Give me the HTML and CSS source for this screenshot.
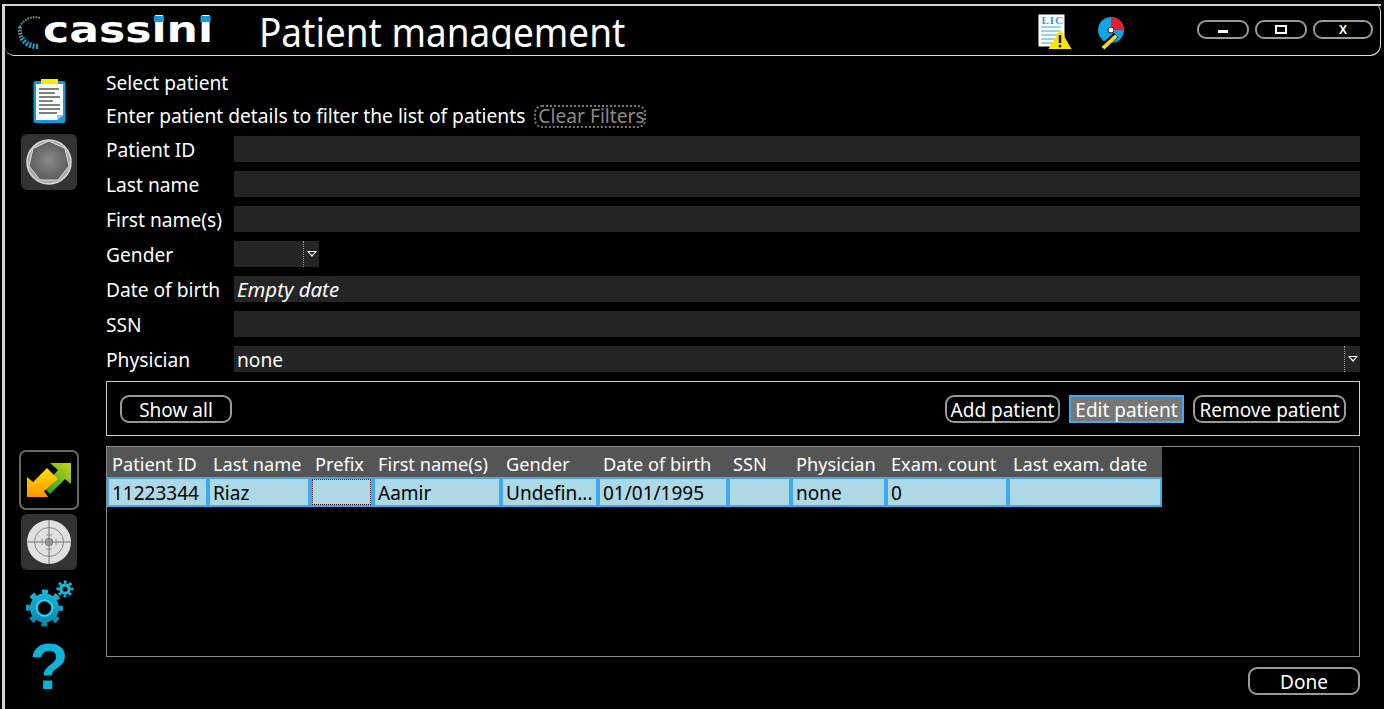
FILE: index.html
```html
<!DOCTYPE html>
<html lang="en">
<head>
    <meta charset="UTF-8">
    <meta name="viewport" content="width=device-width, initial-scale=1.0">
    <title>Patient management</title>
    <link rel="stylesheet" href="styles.css">
</head>
<body>
    <div class="window">
        <header class="titlebar">
            <svg class="swirl" width="27" height="35" viewBox="0 0 27 35">
                <path d="M25 4 A16 16 0 0 0 5 13" fill="none" stroke="#8a9299" stroke-width="2" stroke-dasharray="1.6 1.2"/>
                <path d="M5 13 A16 16 0 0 0 7 24" fill="none" stroke="#6f8ea3" stroke-width="4" stroke-dasharray="1.7 1.2"/>
                <path d="M7 24 A16 16 0 0 0 24 32" fill="none" stroke="#1c9fd8" stroke-width="5.5" stroke-dasharray="1.9 1.5"/>
            </svg>
            <div class="logo">cass<span class="logo-i">i</span>n<span class="logo-i">i</span></div>
            <div class="app-title">Patient management</div>
            <svg class="lic-icon" width="34" height="36" viewBox="0 0 34 36">
                <rect x="0.5" y="0.5" width="26" height="32" fill="#fff"/>
                <text class="lic-text" x="3.5" y="9.5">LIC</text>
                <path d="M3 13H23M3 17H23M3 21H20M3 25H16M3 29H14" stroke="#6cc4ef" stroke-width="1.4"/>
                <path d="M22 15 L33.5 35 H10.5 Z" fill="#ffe600"/>
                <path d="M22 21V29" stroke="#222" stroke-width="2.6"/>
                <circle cx="22" cy="32" r="1.5" fill="#222"/>
            </svg>
            <svg class="disc-icon" width="30" height="36" viewBox="0 0 30 36">
                <circle cx="15" cy="15" r="13" fill="#0ea5e6"/>
                <path d="M15 15V2A13 13 0 0 1 28 15Z" fill="#ee1c25"/>
                <path d="M5 33.5 L20 20" stroke="#000" stroke-width="6"/>
                <path d="M6.5 32 L19 20.5 L20.5 22 L8.5 33.5Z" fill="#f5e017" stroke="#f5e017" stroke-width="1.4" stroke-linejoin="round"/>
                <circle cx="15" cy="15" r="3" fill="#fff" stroke="#222"/>
            </svg>
            <div class="win-buttons">
                <button class="win-btn"><span class="glyph-min"></span></button>
                <button class="win-btn"><span class="glyph-max"></span></button>
                <button class="win-btn win-close">X</button>
            </div>
        </header>

        <div class="main">
            <nav class="sidebar">
                <svg class="clip-icon" width="33" height="44" viewBox="0 0 33 44">
                    <rect x="0.5" y="2" width="32" height="42" rx="2.5" fill="#0a9fe0"/>
                    <path d="M3 5H30V36L24 41H3Z" fill="#fff"/>
                    <path d="M24 41V36H30Z" fill="#bbb"/>
                    <rect x="8" y="0" width="17" height="5" fill="#ffee00"/>
                    <path d="M6 10H26M6 14H22M6 18H27M6 22H20M6 26H27M6 30H27M6 34H24" stroke="#555" stroke-width="1.4"/>
                </svg>
                <div class="tile tile-octagon">
                    <svg width="46" height="46" viewBox="0 0 46 46">
                        <defs>
                            <radialGradient id="octFill">
                                <stop offset="0" stop-color="#8a8a8a"/>
                                <stop offset="1" stop-color="#5e5e5e"/>
                            </radialGradient>
                        </defs>
                        <circle cx="23" cy="23" r="22" fill="#a8a8a8" stroke="#d8d8d8" stroke-width="1.5"/>
                        <path d="M23 2 L39 9.5 L43 27 L32 41 L14 41 L3 27 L7 9.5Z" fill="url(#octFill)" stroke="#ddd"/>
                    </svg>
                </div>

                <div class="bottom-tools">
                    <div class="tile-outline">
                        <svg width="60" height="60" viewBox="0 0 60 60">
                            <defs>
                                <linearGradient id="greenArrow" x1="1" y1="0" x2="0" y2="1">
                                    <stop offset="0" stop-color="#c9d60f"/>
                                    <stop offset="1" stop-color="#159a3c"/>
                                </linearGradient>
                                <linearGradient id="orangeArrow" x1="0" y1="0" x2="0" y2="1">
                                    <stop offset="0" stop-color="#ffe000"/>
                                    <stop offset="1" stop-color="#ff9500"/>
                                </linearGradient>
                            </defs>
                            <path d="M52 13V34L46 29L31 44L24 37L39 20L31 13Z" fill="url(#greenArrow)"/>
                            <path d="M8 47V27L14 32L28 18L39 29L25 41L29 47Z" fill="url(#orangeArrow)"/>
                        </svg>
                    </div>
                    <div class="tile tile-target">
                        <svg width="46" height="46" viewBox="0 0 46 46">
                            <circle cx="23" cy="23" r="22" fill="#e0e0e0"/>
                            <circle cx="23" cy="23" r="14.5" fill="none" stroke="#888" stroke-width="1"/>
                            <circle cx="23" cy="23" r="3.5" fill="#aaa" stroke="#777" stroke-width="1.2"/>
                            <path d="M23 1V45M1 23H45" stroke="#777" stroke-width="1"/>
                            <path d="M20 16H26M20 30H26M16 20V26M30 20V26" stroke="#888"/>
                        </svg>
                    </div>
                    <svg class="gear-icon" width="50" height="50" viewBox="0 0 50 50">
                        <defs>
                            <linearGradient id="gearFill" gradientUnits="userSpaceOnUse" x1="0" y1="8" x2="0" y2="48">
                                <stop offset="0" stop-color="#1cbbdc"/>
                                <stop offset="1" stop-color="#0a7fa8"/>
                            </linearGradient>
                        </defs>
                        <circle cx="18.5" cy="28" r="10.5" fill="none" stroke="url(#gearFill)" stroke-width="8"/>
                        <circle cx="18.5" cy="28" r="16" fill="none" stroke="url(#gearFill)" stroke-width="5" stroke-dasharray="6 6.57" stroke-dashoffset="3"/>
                        <circle cx="18.5" cy="28" r="8" fill="none" stroke="#3fd0ea" stroke-width="1.5"/>
                        <circle cx="39" cy="9" r="4.2" fill="none" stroke="url(#gearFill)" stroke-width="3.2"/>
                        <circle cx="39" cy="9" r="7" fill="none" stroke="url(#gearFill)" stroke-width="3" stroke-dasharray="2.7 2.8" stroke-dashoffset="1.35"/>
                    </svg>
                    <div class="help-icon">?</div>
                </div>
            </nav>

            <main class="content">
                <div class="text-line">Select patient</div>
                <div class="text-line filter-line">
                    <span>Enter patient details to filter the list of patients</span>
                    <span class="clear-filters">Clear Filters</span>
                </div>

                <div class="fields">
                    <div class="field"><label>Patient ID</label><div class="input"></div></div>
                    <div class="field"><label>Last name</label><div class="input"></div></div>
                    <div class="field"><label>First name(s)</label><div class="input"></div></div>
                    <div class="field"><label>Gender</label>
                        <div class="input input-gender"><span class="drop"><i></i></span></div>
                    </div>
                    <div class="field"><label>Date of birth</label><div class="input input-date">Empty date</div></div>
                    <div class="field"><label>SSN</label><div class="input"></div></div>
                    <div class="field"><label>Physician</label>
                        <div class="input">none<span class="drop"><i></i></span></div>
                    </div>
                </div>

                <div class="actions">
                    <button class="btn btn-show">Show all</button>
                    <div class="actions-right">
                        <button class="btn btn-add">Add patient</button>
                        <button class="btn btn-edit">Edit patient</button>
                        <button class="btn btn-remove">Remove patient</button>
                    </div>
                </div>

                <div class="grid-box">
                    <table class="patients">
                        <colgroup>
                            <col class="c1"><col class="c2"><col class="c3"><col class="c4"><col class="c5">
                            <col class="c6"><col class="c7"><col class="c8"><col class="c9"><col class="c10">
                        </colgroup>
                        <thead>
                            <tr>
                                <th>Patient ID</th><th>Last name</th><th>Prefix</th><th>First name(s)</th><th>Gender</th>
                                <th>Date of birth</th><th>SSN</th><th>Physician</th><th>Exam. count</th><th>Last exam. date</th>
                            </tr>
                        </thead>
                        <tbody>
                            <tr>
                                <td>11223344</td><td>Riaz</td><td class="current"></td><td>Aamir</td><td>Undefin...</td>
                                <td>01/01/1995</td><td></td><td>none</td><td>0</td><td></td>
                            </tr>
                        </tbody>
                    </table>
                </div>

                <div class="footer">
                    <button class="btn btn-done">Done</button>
                </div>
            </main>
        </div>
    </div>
</body>
</html>
```

FILE: styles.css
```css
html, body {
    margin: 0;
    height: 709px;
    overflow: hidden;
    background: #000;
}
body {
    font-family: "Noto Sans", Arial, sans-serif;
    font-size: 19.2px;
    color: #fff;
    padding-top: 4px;
    box-sizing: border-box;
}
.window {
    margin-left: 2px;
    height: 705px;
    border-left: 3px solid #d4d4d4;
    box-sizing: border-box;
    display: flex;
    flex-direction: column;
    position: relative;
}
.window::before {
    content: "";
    position: absolute;
    top: 0;
    left: 0;
    right: 3px;
    height: 2px;
    background: #d4d4d4;
}
.titlebar {
    height: 52px;
    flex: none;
    box-sizing: border-box;
    border-bottom: 1px solid #ddd;
    border-right: 1px solid #ddd;
    border-bottom-left-radius: 9px;
    border-bottom-right-radius: 11px;
    border-top-right-radius: 8px;
    margin-right: 3px;
    display: flex;
    align-items: flex-start;
    overflow: hidden;
}
.swirl {
    margin: 10px 0 0 10px;
    flex: none;
}
.logo {
    font-family: "DejaVu Sans", sans-serif;
    font-weight: bold;
    font-size: 35px;
    line-height: 40px;
    margin: 6px 0 0 1px;
    width: 168px;
    flex: none;
    transform: scaleX(1.26);
    transform-origin: left;
    white-space: nowrap;
}
.logo-i {
    position: relative;
}
.logo-i::before {
    content: "";
    position: absolute;
    left: 2px;
    right: 2px;
    top: 6px;
    height: 6px;
    background: #1799d6;
}
.app-title {
    font-size: 40.6px;
    line-height: 50px;
    margin-left: 48px;
    margin-top: 3px;
    height: 42px;
    overflow: hidden;
    white-space: nowrap;
    flex: none;
    transform: scaleX(0.91);
    transform-origin: left;
}
.lic-icon {
    margin: 10px 0 0 auto;
    flex: none;
}
.disc-icon {
    margin: 11px 0 0 24px;
    flex: none;
}
.lic-text {
    font-family: "Liberation Serif", serif;
    font-weight: bold;
    font-size: 11px;
    letter-spacing: 1px;
    fill: #1a9fe0;
}
.win-buttons {
    display: flex;
    gap: 6px;
    margin: 16px 0 0 71px;
    padding-right: 7px;
}
.win-btn {
    width: 52px;
    height: 19px;
    padding: 0;
    background: #000;
    border: 2px solid #999;
    border-radius: 9px;
    color: #fff;
    display: flex;
    align-items: center;
    justify-content: center;
}
.win-close {
    width: 60px;
    font-family: "Liberation Sans", sans-serif;
    font-size: 12px;
    font-weight: bold;
}
.glyph-min {
    width: 10px;
    height: 3px;
    background: #fff;
    margin-top: 4px;
}
.glyph-max {
    width: 8px;
    height: 5px;
    border: 2px solid #fff;
}
.main {
    flex: 1;
    display: flex;
    min-height: 0;
}
.sidebar {
    width: 101px;
    box-sizing: border-box;
    flex: none;
    padding: 23px 13px 19px 0;
    display: flex;
    flex-direction: column;
    align-items: center;
}
.clip-icon {
    flex: none;
}
.tile {
    width: 56px;
    height: 56px;
    background: #333;
    border-radius: 6px;
    display: flex;
    align-items: center;
    justify-content: center;
    flex: none;
}
.tile-octagon {
    margin-top: 11px;
}
.bottom-tools {
    margin-top: auto;
    display: flex;
    flex-direction: column;
    align-items: center;
}
.tile-outline {
    width: 60px;
    height: 60px;
    box-sizing: border-box;
    border: 2px solid #666;
    border-radius: 7px;
}
.tile-outline svg {
    display: block;
    margin: -2px;
}
.tile-target {
    margin-top: 4px;
}
.gear-icon {
    margin: 10px 0 0 4px;
    flex: none;
}
.help-icon {
    font-family: "Liberation Sans", sans-serif;
    font-weight: bold;
    font-size: 64px;
    line-height: 46px;
    height: 46px;
    margin-top: 14px;
    color: #0db2d8;
}
.content {
    width: 1254px;
    flex: none;
    padding-top: 14px;
}
.text-line {
    height: 26px;
    line-height: 26px;
    white-space: nowrap;
}
.filter-line {
    margin-top: 7px;
    display: flex;
    align-items: center;
}
.clear-filters {
    margin-left: 9px;
    width: 112px;
    height: 23px;
    box-sizing: border-box;
    border: 2px dotted #777;
    border-radius: 8px;
    padding-left: 2px;
    color: #8a8a8a;
    overflow: hidden;
    line-height: 18px;
    white-space: nowrap;
}
.fields {
    margin-top: 7px;
    display: flex;
    flex-direction: column;
    gap: 9px;
}
.field {
    display: flex;
    height: 26px;
    line-height: 28px;
}
label {
    width: 128px;
    flex: none;
    white-space: nowrap;
}
.input {
    flex: 1;
    background: #252525;
    padding-left: 3px;
    display: flex;
}
.input-gender {
    flex: none;
    width: 85px;
    box-sizing: border-box;
}
.input-date {
    font-style: italic;
    font-size: 20.4px;
    line-height: 26px;
}
.drop {
    margin-left: auto;
    width: 16px;
    height: 26px;
    box-sizing: border-box;
    border-left: 1px dotted #999;
    display: flex;
    align-items: center;
    justify-content: center;
}
.drop i {
    position: relative;
    width: 0;
    height: 0;
    border-left: 5px solid transparent;
    border-right: 5px solid transparent;
    border-top: 6px solid #fff;
}
.drop i::after {
    content: "";
    position: absolute;
    left: -3px;
    top: -5px;
    border-left: 3px solid transparent;
    border-right: 3px solid transparent;
    border-top: 3.5px solid #252525;
}
.actions {
    margin-top: 9px;
    height: 55px;
    box-sizing: border-box;
    border: 1px solid #ccc;
    padding: 0 13px;
    display: flex;
    align-items: center;
    justify-content: space-between;
}
.actions-right {
    display: flex;
    gap: 9px;
}
.btn {
    height: 28px;
    padding: 2px 0 0;
    box-sizing: border-box;
    background: #000;
    color: #fff;
    border: 2px solid #999;
    border-radius: 9px;
    font-family: inherit;
    font-size: 19px;
    line-height: 22px;
    white-space: nowrap;
}
.btn-show {
    width: 112px;
}
.btn-add {
    width: 115px;
}
.btn-edit {
    width: 115px;
    background: #777;
    border-color: #3fa9f5;
    border-radius: 0;
}
.btn-remove {
    width: 153px;
}
.grid-box {
    margin-top: 10px;
    height: 211px;
    box-sizing: border-box;
    border: 1px solid #8a8a8a;
}
.patients {
    table-layout: fixed;
    width: 1055px;
    border-collapse: separate;
    border-spacing: 0;
}
.c1 { width: 101px; }
.c2 { width: 102px; }
.c3 { width: 63px; }
.c4 { width: 128px; }
.c5 { width: 97px; }
.c6 { width: 130px; }
.c7 { width: 63px; }
.c8 { width: 95px; }
.c9 { width: 122px; }
.c10 { width: 154px; }
.patients th {
    height: 30px;
    box-sizing: border-box;
    padding: 4px 5px 0;
    background: #555;
    font-size: 18.2px;
    line-height: 24px;
    font-weight: normal;
    text-align: left;
    white-space: nowrap;
    overflow: hidden;
}
.patients td {
    height: 30px;
    box-sizing: border-box;
    padding: 3px 3px 0;
    background: #add8e6;
    color: #000;
    font-size: 19px;
    line-height: 23px;
    border: 2px solid #3fa9f5;
    white-space: nowrap;
    overflow: hidden;
}
.patients td.current {
    outline: 1px dotted #300;
    outline-offset: -3px;
}
.footer {
    margin-top: 10px;
    display: flex;
    justify-content: flex-end;
}
.btn-done {
    width: 112px;
}
```
